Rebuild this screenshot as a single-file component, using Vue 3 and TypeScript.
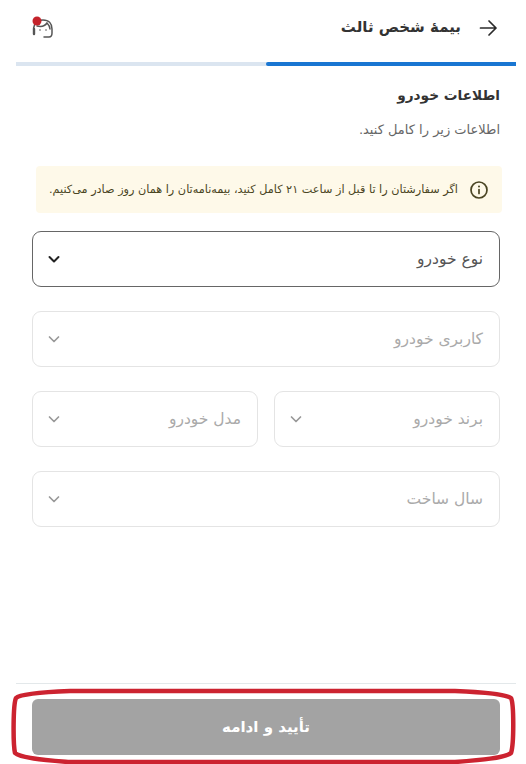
<script setup lang="ts">
const note = 'اگر سفارشتان را تا قبل از ساعت ۲۱ کامل کنید، بیمه‌نامه‌تان را همان روز صادر می‌کنیم.'
</script>

<template>
  <div class="page" dir="rtl">
    <header class="head">
      <div class="head-title">
        <svg class="arrow" width="24" height="24" viewBox="0 0 24 24" fill="none" stroke="#2b2b2b" stroke-width="1.7" stroke-linecap="round" stroke-linejoin="round">
          <path d="M4.5 12H20M13 5l7 7-7 7" />
        </svg>
        <h1>بیمهٔ شخص ثالث</h1>
      </div>
      <div class="agent">
        <svg width="26" height="26" viewBox="0 0 26 26" fill="none" stroke="#555" stroke-width="1.5" stroke-linecap="round">
          <path d="M4 17c-1-5 0-12 9-12 6 0 9 4 9 9v4c0 3-1 4-3 4h-5" />
          <path d="M7 11c4 1 8 0 10-3 2 2 3 4 3 6" />
          <path d="M4 14v5" stroke-width="2.4" />
          <circle cx="10" cy="15" r=".8" fill="#555" stroke="none" />
          <circle cx="16" cy="15" r=".8" fill="#555" stroke="none" />
          <circle cx="7" cy="6" r="4.5" fill="#c4232b" stroke="none" />
        </svg>
      </div>
    </header>

    <div class="progress"><div class="progress-fill"></div></div>

    <main class="body">
      <h2>اطلاعات خودرو</h2>
      <p class="sub">اطلاعات زیر را کامل کنید.</p>

      <div class="notice">
        <svg width="20" height="20" viewBox="0 0 20 20" fill="none" stroke="#4a4523" stroke-width="1.7" stroke-linecap="round">
          <circle cx="10" cy="10" r="8" />
          <path d="M10 9.5v4" />
          <circle cx="10" cy="6.4" r="1" fill="#4a4523" stroke="none" />
        </svg>
        <span>{{ note }}</span>
      </div>

      <div class="fields">
        <div class="select active">
          <span>نوع خودرو</span>
          <svg class="chev" width="14" height="14" viewBox="0 0 14 14" fill="none" stroke="currentColor" stroke-width="2" stroke-linecap="round" stroke-linejoin="round"><path d="M2.5 5l4.5 4.5L11.500 5" /></svg>
        </div>
        <div class="select">
          <span>کاربری خودرو</span>
          <svg class="chev" width="14" height="14" viewBox="0 0 14 14" fill="none" stroke="currentColor" stroke-width="1.7" stroke-linecap="round" stroke-linejoin="round"><path d="M2.5 5l4.500 4.500L11.500 5" /></svg>
        </div>
        <div class="pair">
          <div class="select">
            <span>برند خودرو</span>
            <svg class="chev" width="14" height="14" viewBox="0 0 14 14" fill="none" stroke="currentColor" stroke-width="1.7" stroke-linecap="round" stroke-linejoin="round"><path d="M2.5 5l4.500 4.500L11.500 5" /></svg>
          </div>
          <div class="select">
            <span>مدل خودرو</span>
            <svg class="chev" width="14" height="14" viewBox="0 0 14 14" fill="none" stroke="currentColor" stroke-width="1.7" stroke-linecap="round" stroke-linejoin="round"><path d="M2.5 5l4.500 4.500L11.500 5" /></svg>
          </div>
        </div>
        <div class="select">
          <span>سال ساخت</span>
          <svg class="chev" width="14" height="14" viewBox="0 0 14 14" fill="none" stroke="currentColor" stroke-width="1.7" stroke-linecap="round" stroke-linejoin="round"><path d="M2.5 5l4.500 4.500L11.500 5" /></svg>
        </div>
      </div>
    </main>

    <footer class="foot">
      <button class="submit" type="button">تأیید و ادامه</button>
      <svg class="mark" width="526" height="81" viewBox="0 0 526 81" fill="none" stroke="#cc2330" stroke-width="4.500" stroke-linejoin="round">
        <path d="M70 7C45 8 20 10 16 14 13 20 13 60 15 69 20 74 45 76 68 78L455 78C480 76 505 74 511 69 514 60 514 20 511 14 505 10 480 8 455 7Z" />
      </svg>
    </footer>
  </div>
</template>

<style scoped>
.page {
  width: 526px;
  height: 764px;
  display: flex;
  flex-direction: column;
  background: #fff;
  color: #2f2f2f;
  font-family: "DejaVu Sans", "Noto Sans", sans-serif;
  overflow: hidden;
}
.head {
  height: 62px;
  padding: 0 26px 6px 30px;
  box-sizing: border-box;
  display: flex;
  align-items: center;
  justify-content: space-between;
}
.head-title {
  display: flex;
  align-items: center;
  gap: 15px;
}
h1 {
  margin: -2px 0 0;
  font-size: 15px;
  font-weight: 700;
  color: #333;
}
.agent {
  display: flex;
}
.progress {
  height: 4px;
  margin: 0 10px 0 16px;
  background: #dbe5f0;
}
.progress-fill {
  width: 50%;
  height: 100%;
  background: #1976d2;
  border-radius: 2px 0 0 2px;
}
.body {
  flex: 1;
  padding: 0 26px 0 32px;
}
h2 {
  margin: 19px 0 0;
  font-size: 13.700px;
  line-height: 20px;
  font-weight: 700;
  color: #333;
}
.sub {
  margin: 16px 0 0;
  font-size: 13px;
  line-height: 18px;
  color: #666;
}
.notice {
  margin: 27px -2px 0 4px;
  height: 47px;
  padding: 0 13px 0 10px;
  display: flex;
  align-items: center;
  gap: 11px;
  background: #fef9e9;
  border-radius: 4px;
  font-size: 11.250px;
  color: #4a4523;
  white-space: nowrap;
}
.fields {
  margin-top: 18px;
  display: flex;
  flex-direction: column;
  gap: 24px;
}
.pair {
  display: grid;
  grid-template-columns: 1fr 1fr;
  gap: 16px;
}
.select {
  height: 56px;
  box-sizing: border-box;
  padding: 0 16px 0 14px;
  display: flex;
  align-items: center;
  justify-content: space-between;
  border: 1px solid #e4e4e4;
  border-radius: 9px;
  font-size: 15.500px;
  color: #aaa;
}
.select .chev {
  color: #999;
}
.select.active {
  border-color: #666;
  color: #555;
}
.select.active .chev {
  color: #222;
}
.foot {
  position: relative;
  margin: 0 10px 0 16px;
  height: 81px;
  border-top: 1px solid #e3e8ea;
  box-sizing: border-box;
  padding: 15px 16px 0;
}
.submit {
  display: block;
  width: 100%;
  height: 56px;
  border: 0;
  border-radius: 6px;
  background: #a3a3a3;
  color: #fff;
  font-family: inherit;
  font-size: 15px;
  font-weight: 700;
}
.mark {
  position: absolute;
  left: -16px;
  top: 0;
  pointer-events: none;
}
</style>
